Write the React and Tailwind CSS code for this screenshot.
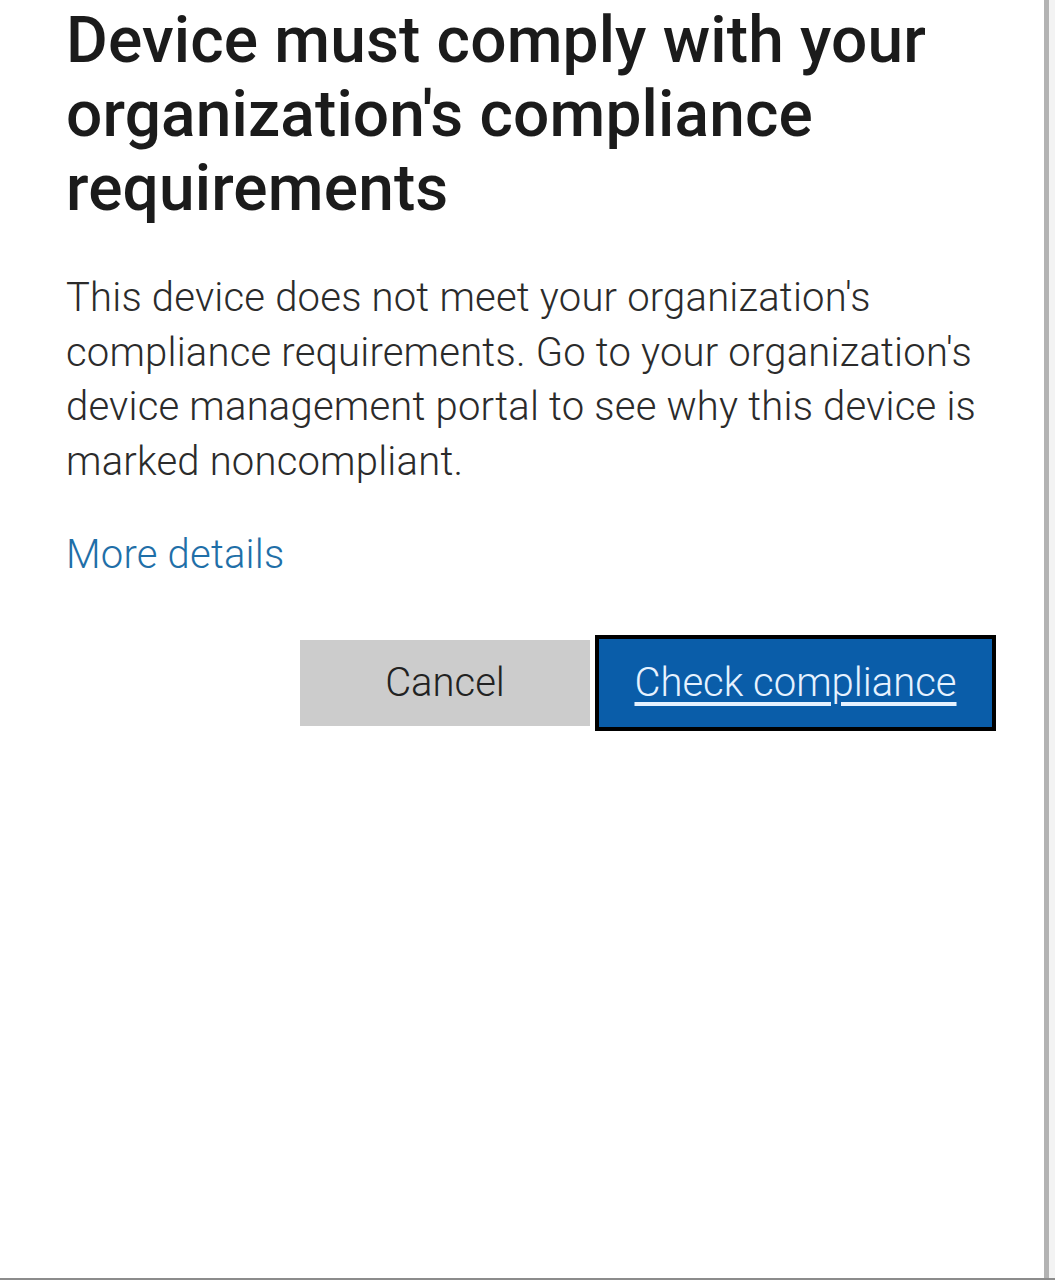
import React from "react";

const App = () => {
  return (
    <div className="flex h-[1280px] w-[1055px] flex-col bg-white font-['Roboto',sans-serif]">
      <div className="flex flex-1">
        <div className="flex-1 bg-white pl-[66px] pr-[48px] pt-[4px]">
          <h1 className="text-[64px] font-medium leading-[74px] tracking-[0.15px] text-[#1b1b1b]">
            Device must comply with your organization's compliance
            requirements
          </h1>
          <p className="mt-[45px] text-[40px] font-light leading-[54.5px] tracking-[0.2px] text-[#2b2b2b]">
            This device does not meet your organization's compliance
            requirements. Go to your organization's device management portal
            to see why this device is marked noncompliant.
          </p>
          <a className="mt-[39px] block text-[40px] font-light leading-[54.5px] tracking-[0.2px] text-[#1f6fa8]">
            More details
          </a>
          <div className="mt-[52px] flex items-center justify-end gap-[5px]">
            <button className="h-[86px] w-[290px] bg-[#cccccc] text-[40px] font-light text-[#222222]">
              Cancel
            </button>
            <button className="h-[96px] w-[401px] border-[4px] border-black bg-[#0a5da9] text-[40px] font-light text-[#e6f2ff] underline underline-offset-[6px]">
              Check compliance
            </button>
          </div>
        </div>
        <div className="w-[5px] bg-[#b3b3b3]" />
        <div className="w-[6px] bg-[#f3f3f3]" />
      </div>
      <div className="h-[2px] bg-[#8c8c8c]" />
    </div>
  );
};

export default App;
